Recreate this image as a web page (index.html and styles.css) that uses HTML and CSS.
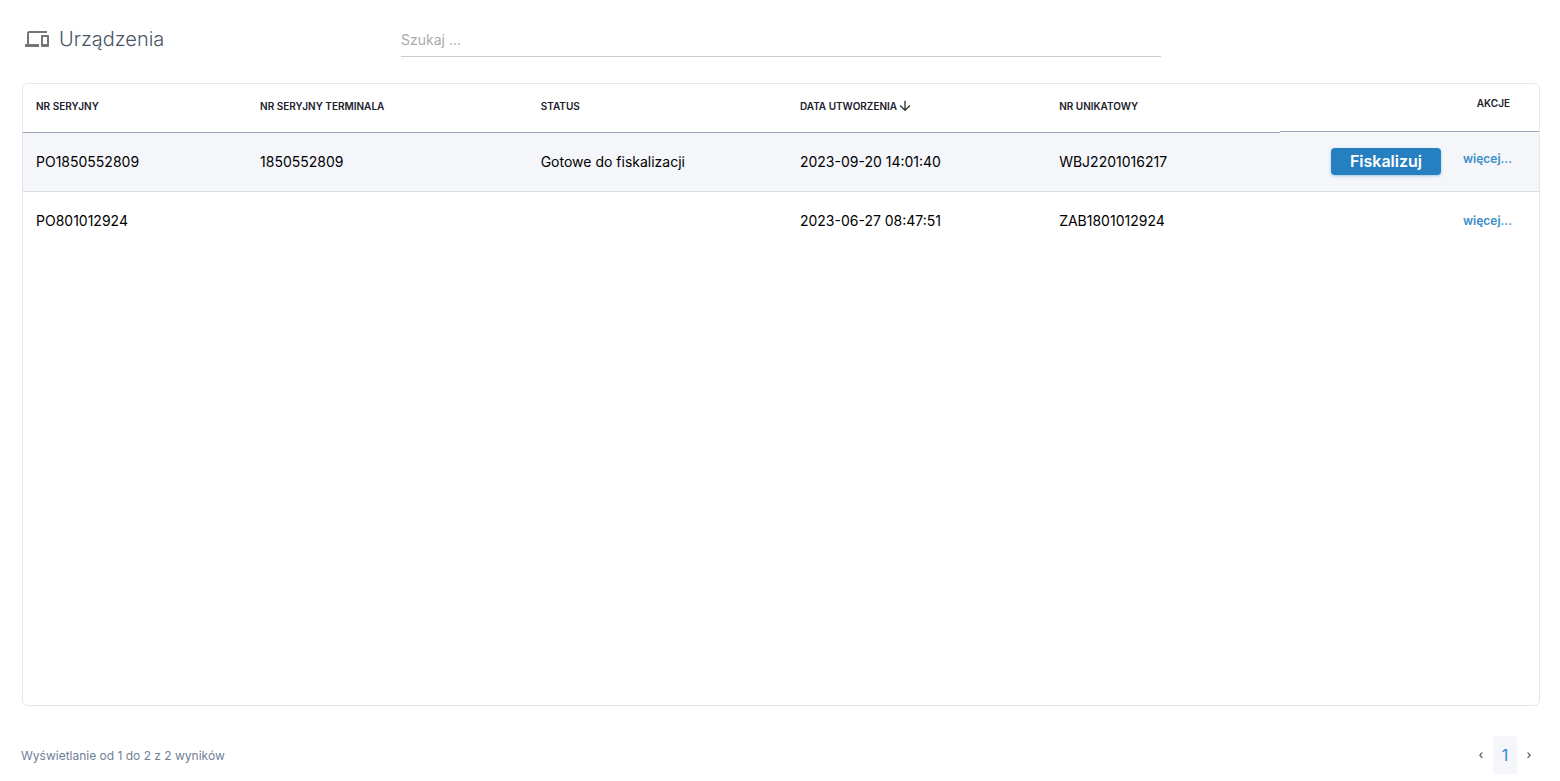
FILE: index.html
```html
<!DOCTYPE html>
<html lang="pl">
<head>
<meta charset="utf-8">
<meta name="viewport" content="width=device-width, initial-scale=1">
<title>Urządzenia</title>
<link rel="stylesheet" href="styles.css">
</head>
<body>
<header class="topbar">
  <h1 class="title">
    <svg class="title-icon" viewBox="0 0 24 24" aria-hidden="true"><path d="M4 6h18V4H4c-1.1 0-2 .9-2 2v11H0v3h14v-3H4V6zm19 2h-6c-.55 0-1 .45-1 1v10c0 .55.45 1 1 1h6c.55 0 1-.45 1-1V9c0-.55-.45-1-1-1zm-1 9h-4v-7h4v7z"/></svg>
    <span>Urządzenia</span>
  </h1>
  <input class="search" type="search" placeholder="Szukaj ..." aria-label="Szukaj">
</header>
<main class="card">
  <table class="devices">
    <colgroup>
      <col class="col-serial"><col class="col-terminal"><col class="col-status"><col class="col-date"><col class="col-unique"><col class="col-actions">
    </colgroup>
    <thead>
      <tr>
        <th scope="col">NR SERYJNY</th>
        <th scope="col">NR SERYJNY TERMINALA</th>
        <th scope="col">STATUS</th>
        <th scope="col" aria-sort="descending"><span class="sorted">DATA UTWORZENIA<svg class="sort-icon" viewBox="0 0 24 24" aria-hidden="true"><path d="M20 12l-1.41-1.41L13 16.17V4h-2v12.17l-5.58-5.59L4 12l8 8 8-8z"/></svg></span></th>
        <th scope="col">NR UNIKATOWY</th>
        <th scope="col" class="actions-head">AKCJE</th>
      </tr>
    </thead>
    <tbody>
      <tr class="active">
        <td>PO1850552809</td>
        <td>1850552809</td>
        <td>Gotowe do fiskalizacji</td>
        <td>2023-09-20 14:01:40</td>
        <td>WBJ2201016217</td>
        <td><div class="actions"><button class="primary" type="button">Fiskalizuj</button><a class="more" href="#">więcej...</a></div></td>
      </tr>
      <tr>
        <td>PO801012924</td>
        <td></td>
        <td></td>
        <td>2023-06-27 08:47:51</td>
        <td>ZAB1801012924</td>
        <td><div class="actions"><a class="more" href="#">więcej...</a></div></td>
      </tr>
    </tbody>
  </table>
</main>
<footer class="footer">
  <p class="summary">Wyświetlanie od 1 do 2 z 2 wyników</p>
  <nav class="pager" aria-label="Strony">
    <button class="page" type="button" aria-label="Poprzednia">‹</button>
    <button class="page current" type="button" aria-current="page">1</button>
    <button class="page" type="button" aria-label="Następna">›</button>
  </nav>
</footer>
</body>
</html>
```

FILE: styles.css
```css
* {
  box-sizing: border-box;
}

body {
  display: flex;
  flex-direction: column;
  min-height: 100vh;
  margin: 0;
  padding: 24px 19px 7px 21px;
  background: #fff;
  color: #000;
  font-family: Inter, "Liberation Sans", sans-serif;
  font-size: 14px;
}

.topbar {
  display: grid;
  grid-template-columns: 1fr 2fr 1fr;
  align-items: start;
  margin-bottom: 26px;
}

.title {
  display: flex;
  align-items: center;
  gap: 10px;
  margin: 0;
  padding-left: 4px;
  color: #4a5568;
  font-size: 20px;
  font-weight: 300;
  line-height: 30px;
}

.title-icon {
  width: 24px;
  height: 24px;
  fill: #757575;
}

.search {
  width: 100%;
  height: 33px;
  padding: 0 0 2px;
  border: 0;
  border-bottom: 1px solid #ccc;
  background: none;
  color: #333;
  font: inherit;
  outline: none;
}

.search::placeholder {
  color: #aaa;
}

.card {
  flex: 1;
  margin: 0 1px;
  overflow: hidden;
  border: 1px solid #e5e7eb;
  border-radius: 6px;
}

.devices {
  width: 100%;
  table-layout: fixed;
  border-collapse: separate;
  border-spacing: 0;
}

.col-serial { width: 14.78%; }
.col-terminal { width: 18.51%; }
.col-status,
.col-date,
.col-actions { width: 17.1%; }
.col-unique { width: 15.41%; }

th {
  height: 49px;
  padding: 0 13px 4px;
  border-bottom: 1px solid #9aa5b8;
  color: #1a202c;
  font-size: 10px;
  font-weight: 600;
  text-align: left;
}

.sorted {
  display: flex;
  align-items: center;
}

.sort-icon {
  width: 16px;
  height: 16px;
  fill: #333;
}

.actions-head {
  padding: 0 29px 10px;
  border-bottom-color: #f4f6fa;
  box-shadow: inset 0 -1px #9aa5b8;
  text-align: right;
}

td {
  height: 59px;
  padding: 0 13px 2px;
  font-weight: 400;
}

.active td {
  border-bottom: 1px solid #d9dce1;
  background: #f4f6fa;
}

.actions {
  display: flex;
  align-items: center;
  justify-content: flex-end;
  gap: 22px;
  padding-right: 14px;
}

.primary {
  height: 27px;
  padding: 0 19px;
  border: 0;
  border-radius: 4px;
  background: #267fc1;
  box-shadow: 0 1px 3px rgba(38, 127, 193, 0.4);
  color: #fff;
  font: 600 16px/27px Inter, "Liberation Sans", sans-serif;
}

.more {
  color: #3b8ec9;
  font-size: 12px;
  font-weight: 600;
  text-decoration: none;
}

.active .more {
  padding-bottom: 5px;
}

.footer {
  display: flex;
  align-items: center;
  justify-content: space-between;
  margin-top: 30px;
}

.summary {
  margin: 0;
  color: #718096;
  font-size: 12px;
}

.pager {
  display: flex;
}

.page {
  width: 24px;
  height: 38px;
  padding: 0;
  border: 0;
  border-radius: 3px;
  background: none;
  color: #4a5568;
  font: 500 12px/38px Inter, "Liberation Sans", sans-serif;
}

.current {
  background: #f4f6fa;
  color: #2589d8;
  font-size: 16px;
  font-weight: 400;
}
```
